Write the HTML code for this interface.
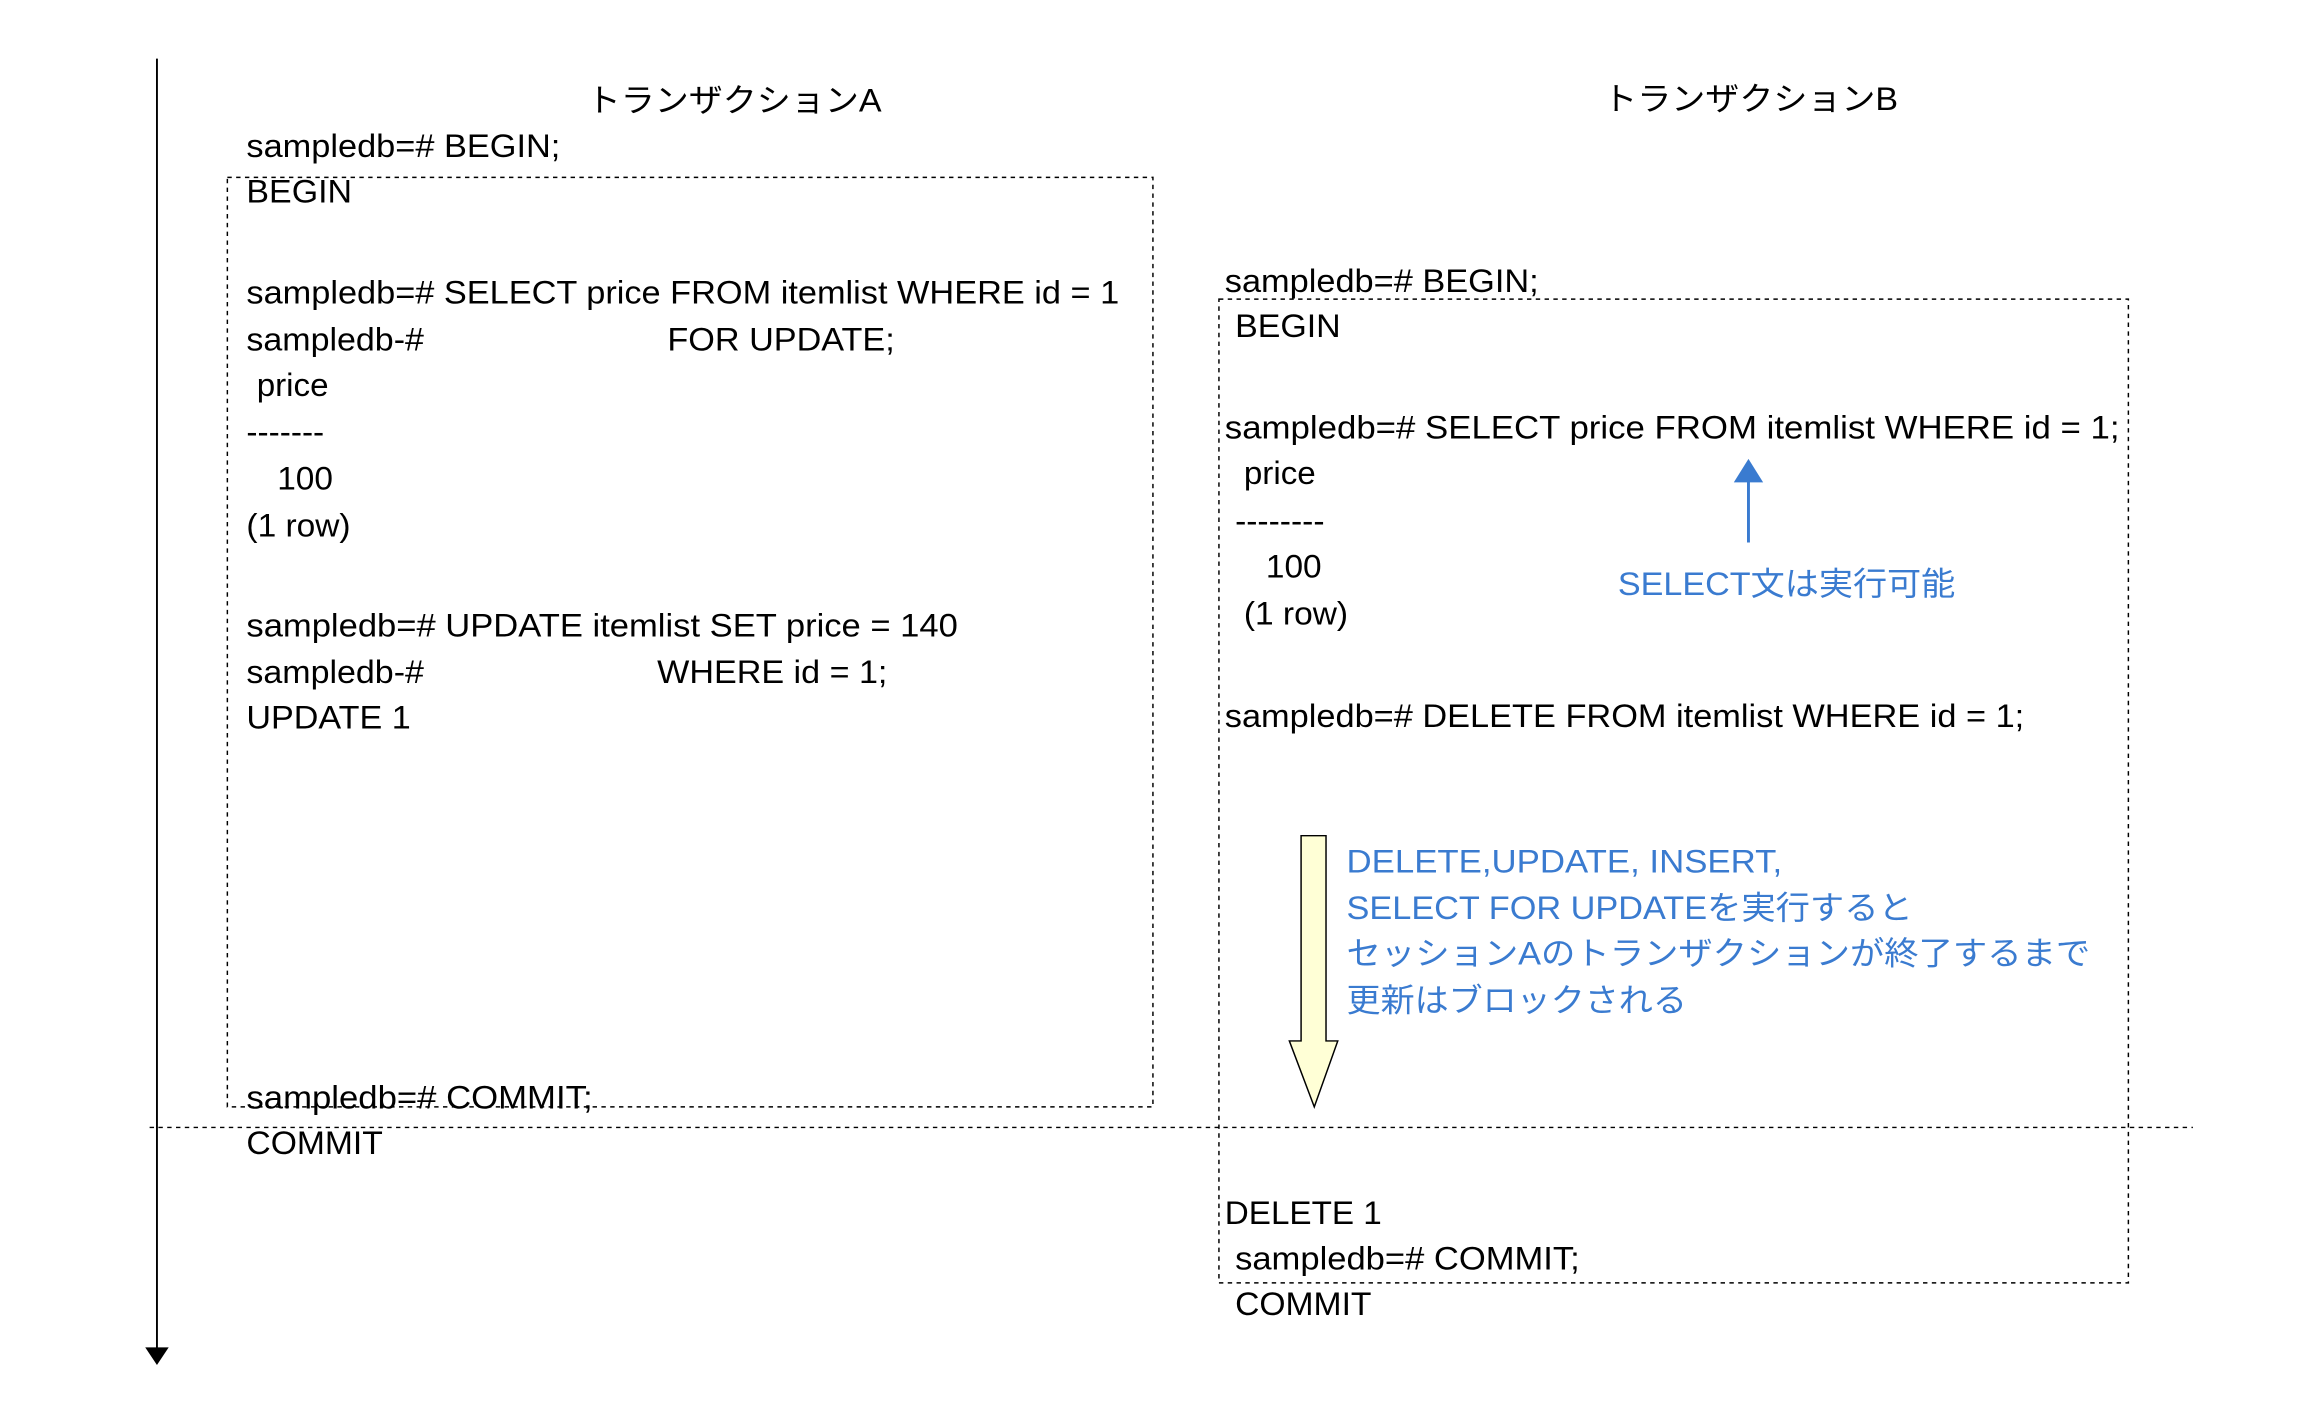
<!DOCTYPE html>
<html><head><meta charset="utf-8"><style>
html,body{margin:0;padding:0;background:#fff;width:2300px;height:1428px;overflow:hidden}
svg{display:block}
text{font-family:"Liberation Sans","Noto Sans CJK JP",sans-serif;font-size:22px;fill:#000}
.b{fill:#3a7bd0}
</style></head><body>
<svg width="2300" height="1428" viewBox="0 0 1568 974" preserveAspectRatio="none">
<line x1="107" y1="40" x2="107" y2="920" stroke="#000" stroke-width="1.3"/>
<polygon points="99,919 115,919 107,931" fill="#000"/>
<rect x="155" y="121" width="631" height="634" fill="none" stroke="#000" stroke-width="1" stroke-dasharray="3,3"/>
<rect x="831" y="204" width="620" height="671" fill="none" stroke="#000" stroke-width="1" stroke-dasharray="3,3"/>
<line x1="102" y1="769" x2="1495" y2="769" stroke="#000" stroke-width="1" stroke-dasharray="3,3"/>

<text x="400" y="76" textLength="201" lengthAdjust="spacingAndGlyphs">トランザクションA</text>
<text x="1093" y="75" textLength="201" lengthAdjust="spacingAndGlyphs">トランザクションB</text>

<text x="168" y="107" textLength="214" lengthAdjust="spacingAndGlyphs">sampledb=# BEGIN;</text>
<text x="168" y="138" textLength="72" lengthAdjust="spacingAndGlyphs">BEGIN</text>
<text x="168" y="207" textLength="595" lengthAdjust="spacingAndGlyphs">sampledb=# SELECT price FROM itemlist WHERE id = 1</text>
<text x="168" y="239" textLength="121" lengthAdjust="spacingAndGlyphs">sampledb-#</text>
<text x="455" y="239" textLength="155" lengthAdjust="spacingAndGlyphs">FOR UPDATE;</text>
<text x="175" y="270" textLength="49" lengthAdjust="spacingAndGlyphs">price</text>
<text x="168" y="302" textLength="53" lengthAdjust="spacingAndGlyphs">-------</text>
<text x="189" y="334" textLength="38" lengthAdjust="spacingAndGlyphs">100</text>
<text x="168" y="366" textLength="71" lengthAdjust="spacingAndGlyphs">(1 row)</text>
<text x="168" y="434" textLength="485" lengthAdjust="spacingAndGlyphs">sampledb=# UPDATE itemlist SET price = 140</text>
<text x="168" y="466" textLength="121" lengthAdjust="spacingAndGlyphs">sampledb-#</text>
<text x="448" y="466" textLength="157" lengthAdjust="spacingAndGlyphs">WHERE id = 1;</text>
<text x="168" y="497" textLength="112" lengthAdjust="spacingAndGlyphs">UPDATE 1</text>
<text x="168" y="756" textLength="236" lengthAdjust="spacingAndGlyphs">sampledb=# COMMIT;</text>
<text x="168" y="787" textLength="93" lengthAdjust="spacingAndGlyphs">COMMIT</text>

<text x="835" y="199" textLength="214" lengthAdjust="spacingAndGlyphs">sampledb=# BEGIN;</text>
<text x="842" y="230" textLength="72" lengthAdjust="spacingAndGlyphs">BEGIN</text>
<text x="835" y="299" textLength="610" lengthAdjust="spacingAndGlyphs">sampledb=# SELECT price FROM itemlist  WHERE id = 1;</text>
<text x="848" y="330" textLength="49" lengthAdjust="spacingAndGlyphs">price</text>
<text x="842" y="363" textLength="61" lengthAdjust="spacingAndGlyphs">--------</text>
<text x="863" y="394" textLength="38" lengthAdjust="spacingAndGlyphs">100</text>
<text x="848" y="426" textLength="71" lengthAdjust="spacingAndGlyphs">(1 row)</text>
<text x="835" y="496" textLength="545" lengthAdjust="spacingAndGlyphs">sampledb=# DELETE FROM itemlist WHERE id = 1;</text>
<text x="835" y="835" textLength="107" lengthAdjust="spacingAndGlyphs">DELETE 1</text>
<text x="842" y="866" textLength="235" lengthAdjust="spacingAndGlyphs">sampledb=# COMMIT;</text>
<text x="842" y="897" textLength="93" lengthAdjust="spacingAndGlyphs">COMMIT</text>

<line x1="1192" y1="370" x2="1192" y2="325" stroke="#3a7bd0" stroke-width="2"/>
<polygon points="1182,329 1202,329 1192,313" fill="#3a7bd0"/>
<text class="b" x="1103" y="406" textLength="230" lengthAdjust="spacingAndGlyphs">SELECT文は実行可能</text>

<polygon points="887,570 904,570 904,710 912,710 896,755 879,710 887,710" fill="#ffffd6" stroke="#000" stroke-width="1"/>
<text class="b" x="918" y="595" textLength="297" lengthAdjust="spacingAndGlyphs">DELETE,UPDATE, INSERT,</text>
<text class="b" x="918" y="627" textLength="386" lengthAdjust="spacingAndGlyphs">SELECT FOR UPDATEを実行すると</text>
<text class="b" x="918" y="658" textLength="507" lengthAdjust="spacingAndGlyphs">セッションAのトランザクションが終了するまで</text>
<text class="b" x="918" y="690" textLength="232" lengthAdjust="spacingAndGlyphs">更新はブロックされる</text>
</svg>
</body></html>
